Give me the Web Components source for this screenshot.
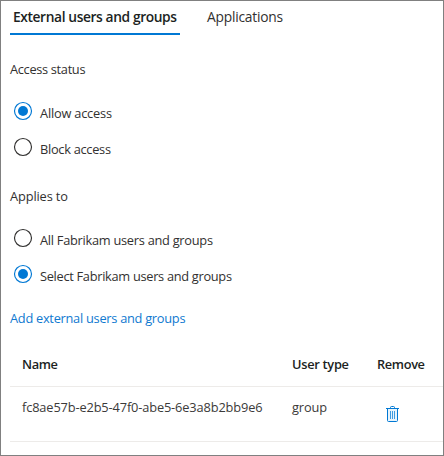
<!DOCTYPE html>
<html lang="en">
<head>
<meta charset="utf-8">
<title>External access</title>
<style>
html,body{margin:0;height:100%}
body{background:#fff;font:12.8px/18px "Open Sans","Noto Sans",sans-serif;color:#323130}
</style>
</head>
<body>
<access-panel></access-panel>
<script>
const define = (name, html, setup) => customElements.define(name, class extends HTMLElement {
  connectedCallback() {
    if (this.shadowRoot) return;
    const t = document.createElement('template');
    t.innerHTML = html;
    this.attachShadow({mode: 'open'}).append(t.content.cloneNode(true));
    if (setup) setup(this);
  }
});

// One line of text whose tracking is adjusted to fill a given width.
define('fit-text', `<style>:host{display:block;white-space:nowrap}span{display:inline-block}</style><span><slot></slot></span>`, el => {
  const span = el.shadowRoot.querySelector('span');
  const w = parseFloat(el.getAttribute('w'));
  const natural = span.getBoundingClientRect().width;
  span.style.letterSpacing = (w - natural) / (el.textContent.length - 1) + 'px';
  el.style.width = w + 'px';
});

define('tab-item', `<style>
:host{display:block;box-sizing:border-box;height:27px;padding:0 3px;font-size:13.8px;line-height:17px;color:#323130;border-bottom:2px solid transparent}
:host([active]){font-weight:600;color:#201f1e;border-color:#0078d4}
</style><slot></slot>`);

define('radio-option', `<style>
:host{display:flex;height:20px;padding-left:4px;gap:7px}
svg{flex:none;width:20px;height:20px;margin-top:-3px;margin-left:-1px}
.ring{fill:#fff;stroke:#323130;stroke-width:1.15}
.dot{display:none;fill:#0078d4}
:host([checked]) .ring{stroke:#0078d4}
:host([checked]) .dot{display:block}
</style><svg viewBox="0 0 20 20"><circle class="ring" cx="10" cy="10" r="8.5"/><circle class="dot" cx="10" cy="10" r="5"/></svg><slot></slot>`);

define('trash-icon', `<style>:host{display:block;width:13px;height:16px}svg{display:block}</style>
<svg width="13" height="16" viewBox="0 0 13 16" fill="none" stroke="#0078d4">
<path d="M1.5 2.5v12q0 1 1 1h8q1 0 1-1v-12" fill="#e8f4fc" stroke-width="1"/>
<path d="M0 2.5h13M4.5 2.5v-1q0-1 1-1h2q1 0 1 1v1"/>
<path d="M4.5 5v8M6.5 5v8M8.5 5v8" stroke="#3f9be0"/></svg>`);

define('table-row', `<style>
:host{display:grid;grid-template-columns:270px 85px 1fr;box-sizing:border-box;padding-left:12px;border-bottom:1px solid #edebe9;color:#3b3a39}
:host([head]){height:32px;color:#201f1e;font-weight:600}
:host(:not([head])){height:55px;padding-top:11px}
</style><slot></slot>`);

define('access-panel', `<style>
:host{display:flex;flex-direction:column;box-sizing:border-box;width:444px;height:456px;border:1px solid #808080;padding:7px 0 0 9px}
nav{display:flex;gap:24px}
h2{font:inherit;margin:0;height:20px}
.status{margin-top:25px}
.radios{display:grid;gap:16px;margin-top:24px}
.scope{margin-top:27px}
a{display:block;height:20px;margin-top:22px;color:#0f79d0;text-decoration:none}
section{margin-top:26px}
trash-icon{margin:8px 0 0 9px}
</style>
<nav><tab-item active><fit-text w="164">External users and groups</fit-text></tab-item><tab-item><fit-text w="76">Applications</fit-text></tab-item></nav>
<h2 class="status"><fit-text w="75.5">Access status</fit-text></h2>
<div class="radios"><radio-option checked><fit-text w="72">Allow access</fit-text></radio-option><radio-option><fit-text w="71">Block access</fit-text></radio-option></div>
<h2 class="scope"><fit-text w="58">Applies to</fit-text></h2>
<div class="radios"><radio-option><fit-text w="173">All Fabrikam users and groups</fit-text></radio-option><radio-option checked><fit-text w="192">Select Fabrikam users and groups</fit-text></radio-option></div>
<a><fit-text w="175.5">Add external users and groups</fit-text></a>
<section>
<table-row head><fit-text w="36">Name</fit-text><fit-text w="57">User type</fit-text><fit-text w="48">Remove</fit-text></table-row>
<table-row><fit-text w="240.5">fc8ae57b-e2b5-47f0-abe5-6e3a8b2bb9e6</fit-text><fit-text w="35">group</fit-text><trash-icon></trash-icon></table-row>
</section>`);
</script>
</body>
</html>
